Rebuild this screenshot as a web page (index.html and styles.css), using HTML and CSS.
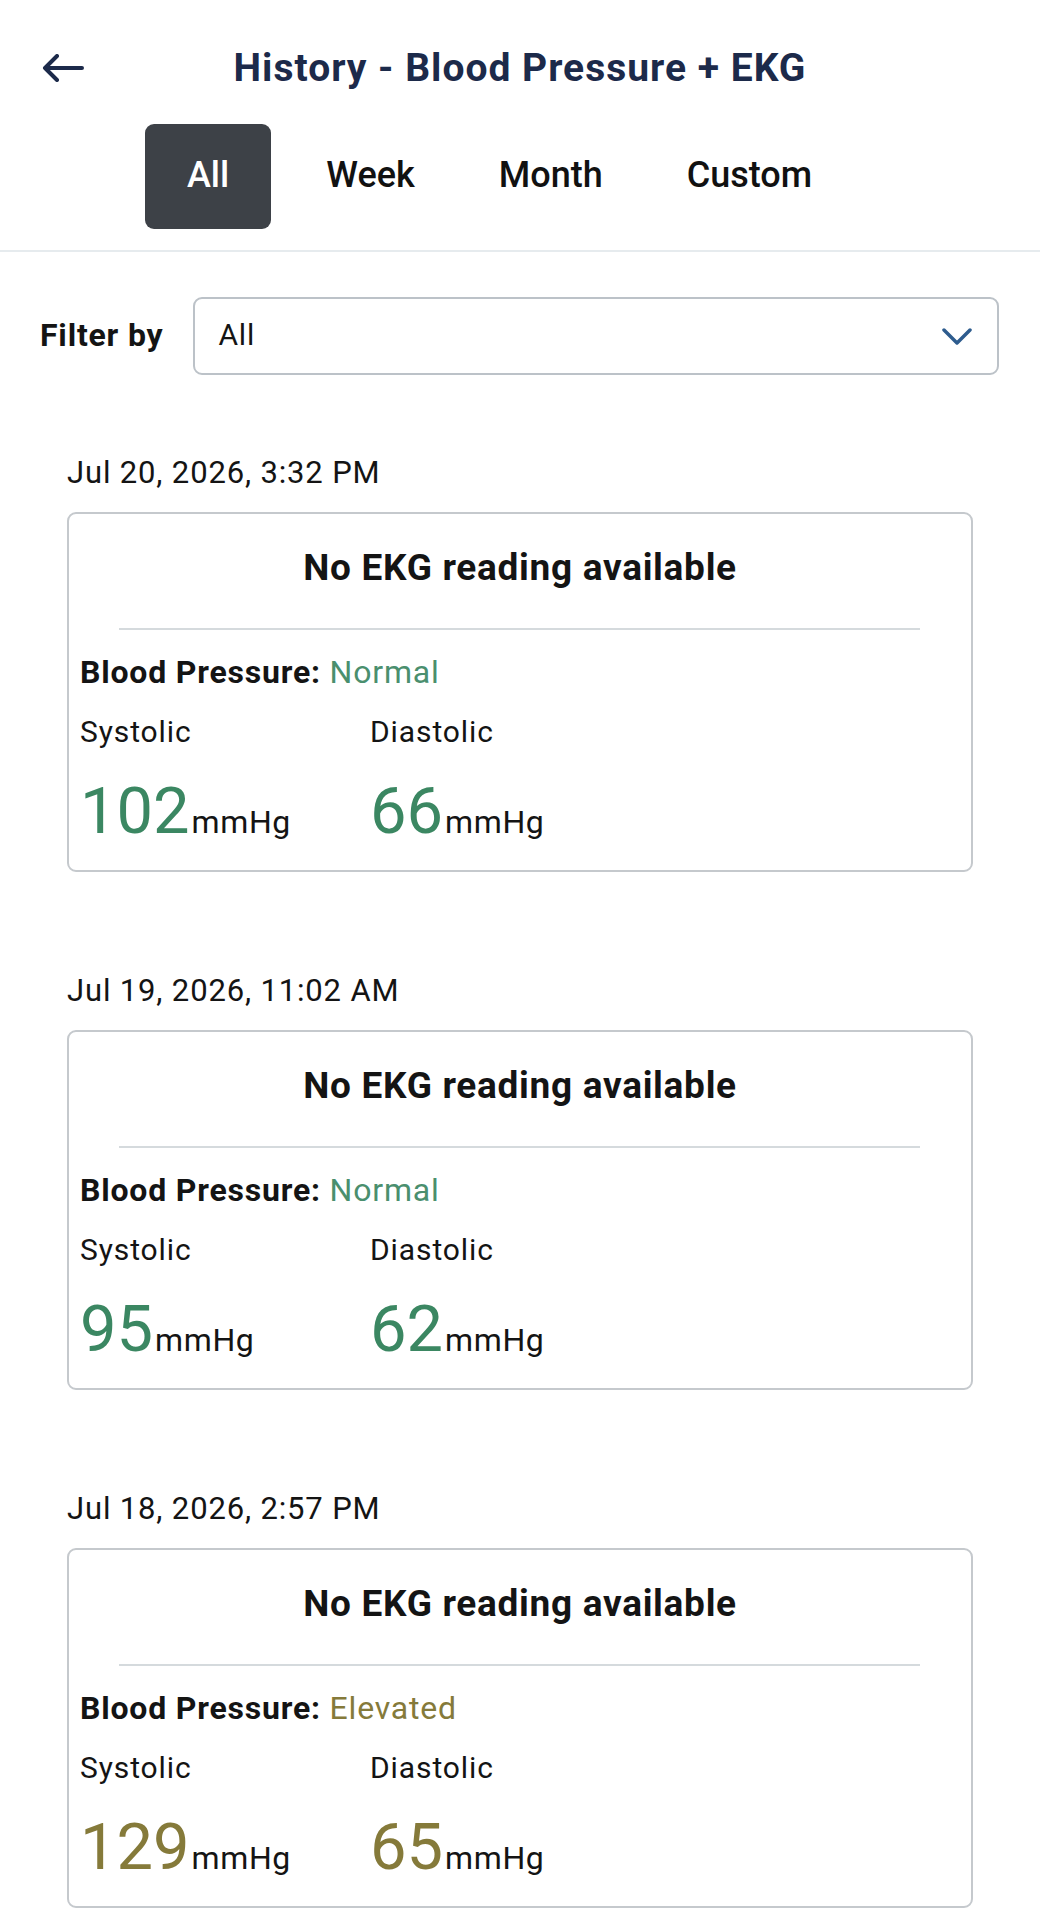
FILE: index.html
```html
<!DOCTYPE html>
<html>
<head>
    <title>History - Blood Pressure + EKG</title>
    <link rel="stylesheet" href="styles.css">
</head>
<body>
    <div class="header">
        <a class="back" href="#">
            <svg width="42" height="28" viewBox="0 0 42 28">
                <path d="M40 14H3M15 2L3 14l12 12" fill="none" stroke="currentColor" stroke-width="4" stroke-linecap="round" stroke-linejoin="round"/>
            </svg>
        </a>
        <h1 class="title">History - Blood Pressure + EKG</h1>
        <span></span>
    </div>

    <div class="tabs">
        <button class="tab active">All</button>
        <button class="tab">Week</button>
        <button class="tab">Month</button>
        <button class="tab">Custom</button>
    </div>

    <div class="filter">
        <label for="filter">Filter by</label>
        <div class="select" id="filter">
            <span>All</span>
            <svg width="30" height="17" viewBox="0 0 30 17">
                <path d="M2 2l13 13L28 2" fill="none" stroke="currentColor" stroke-width="3.5" stroke-linecap="round" stroke-linejoin="round"/>
            </svg>
        </div>
    </div>

    <div class="date">Jul 20, 2026, 3:32 PM</div>
    <div class="card">
        <h2>No EKG reading available</h2>
        <hr>
        <div class="status">Blood Pressure: <span class="normal">Normal</span></div>
        <div class="readings">
            <div>Systolic</div>
            <div>Diastolic</div>
            <div class="value normal">102<small>mmHg</small></div>
            <div class="value normal">66<small>mmHg</small></div>
        </div>
    </div>

    <div class="date">Jul 19, 2026, 11:02 AM</div>
    <div class="card">
        <h2>No EKG reading available</h2>
        <hr>
        <div class="status">Blood Pressure: <span class="normal">Normal</span></div>
        <div class="readings">
            <div>Systolic</div>
            <div>Diastolic</div>
            <div class="value normal">95<small>mmHg</small></div>
            <div class="value normal">62<small>mmHg</small></div>
        </div>
    </div>

    <div class="date">Jul 18, 2026, 2:57 PM</div>
    <div class="card">
        <h2>No EKG reading available</h2>
        <hr>
        <div class="status">Blood Pressure: <span class="elevated">Elevated</span></div>
        <div class="readings">
            <div>Systolic</div>
            <div>Diastolic</div>
            <div class="value elevated">129<small>mmHg</small></div>
            <div class="value elevated">65<small>mmHg</small></div>
        </div>
    </div>
</body>
</html>
```

FILE: styles.css
```css
body {
    margin: 0;
    background-color: white;
    color: #141414;
    font-family: 'Roboto', sans-serif;
}
.header {
    display: grid;
    grid-template-columns: 1fr auto 1fr;
    align-items: center;
    padding-top: 41px;
    height: 54px;
}
.back {
    color: #1c2a4a;
    padding-left: 42px;
    display: flex;
}
.title {
    margin: 0;
    font-size: 39px;
    line-height: 54px;
    font-weight: 700;
    letter-spacing: 1px;
    color: #1c2a4a;
}
.tabs {
    display: flex;
    padding: 29px 0 21px 145px;
    border-bottom: 2px solid #e6ebee;
}
.tab {
    height: 105px;
    padding: 0 42px 4px;
    border: none;
    border-radius: 9px;
    background: none;
    font-family: inherit;
    font-size: 36px;
    font-weight: 500;
    color: #111;
}
.tab.active {
    background-color: #3d4147;
    color: white;
    margin-right: 13px;
}
.filter {
    display: flex;
    align-items: center;
    gap: 30px;
    margin-top: 45px;
    padding: 0 41px 0 40px;
}
.filter label {
    font-size: 32px;
    font-weight: 700;
    letter-spacing: 0.8px;
    padding-bottom: 3px;
}
.select {
    flex: 1;
    display: flex;
    align-items: center;
    justify-content: space-between;
    height: 74px;
    padding: 0 25px 0 23px;
    border: 2px solid #bcc2c8;
    border-radius: 9px;
    font-size: 30px;
    letter-spacing: 0.8px;
}
.select span {
    padding-bottom: 3px;
}
.select svg {
    color: #2e5c8e;
}
.date {
    margin: 78px 67px 19px;
    font-size: 31px;
    line-height: 40px;
    letter-spacing: 0.85px;
}
.card + .date {
    margin-top: 99px;
}
.card {
    margin: 0 67px;
    padding: 32px 0 13px;
    border: 2px solid #c5c9cd;
    border-radius: 9px;
}
.card h2 {
    margin: 0;
    text-align: center;
    font-size: 37px;
    line-height: 44px;
    font-weight: 700;
    letter-spacing: 0.7px;
}
.card hr {
    margin: 38px 51px 0 50px;
    border: none;
    border-top: 2px solid #d5dadd;
}
.status {
    margin: 22px 11px 0;
    font-size: 32px;
    line-height: 40px;
    font-weight: 700;
    letter-spacing: 0.8px;
}
.status span {
    font-weight: 400;
}
.readings {
    display: grid;
    grid-template-columns: 290px 1fr;
    row-gap: 24px;
    margin: 20px 11px 0;
    font-size: 30px;
    line-height: 40px;
    letter-spacing: 0.9px;
}
.value {
    font-size: 65px;
    line-height: 70px;
    letter-spacing: 0;
}
.value small {
    margin-left: 2px;
    font-size: 32px;
    color: #141414;
    letter-spacing: 0.6px;
}
.normal {
    color: #3b8762;
}
.status .normal {
    color: #4a8f6e;
}
.elevated {
    color: #857a3a;
}
```
